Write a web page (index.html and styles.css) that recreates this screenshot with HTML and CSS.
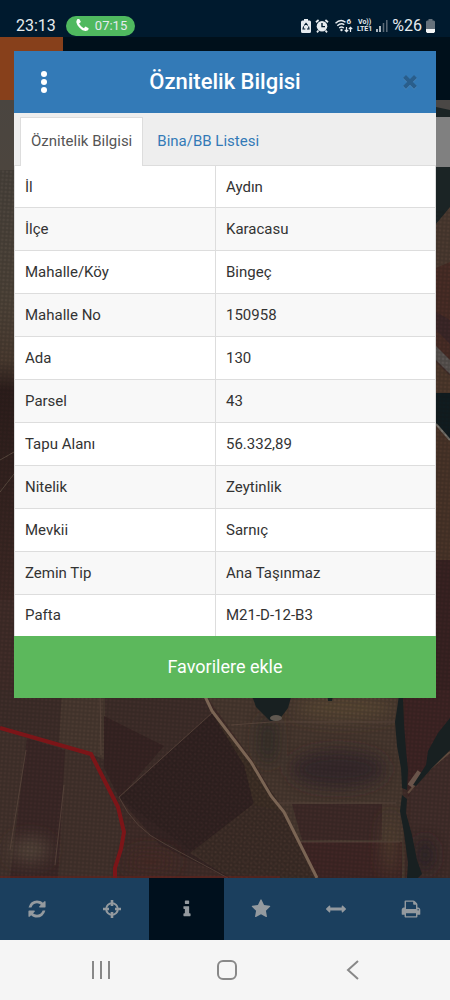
FILE: index.html
```html
<!DOCTYPE html>
<html lang="tr">
<head>
<meta charset="utf-8">
<meta name="viewport" content="width=device-width, initial-scale=1">
<title>Öznitelik Bilgisi</title>
<link rel="stylesheet" href="styles.css">
</head>
<body>
<div class="screen">
  <header class="status">
    <span class="clock">23:13</span>
    <span class="call"><svg class="call-icon" viewBox="150 150 1500 1500" aria-hidden="true"><path d="M1600 1240q0 27-10 70.5t-21 68.5q-21 50-122 106-94 51-186 51-27 0-53-3.5t-57.5-12.5-47-14.5-55.5-20.5-49-18q-98-35-175-83-127-79-264-216t-216-264q-48-77-83-175-3-9-18-49t-20.5-55.5-14.5-47-12.5-57.5-3.5-53q0-92 51-186 56-101 106-122 25-11 68.5-21t70.5-10q14 0 21 3 18 6 53 76 11 19 30 54t35 63.5 31 53.5q3 4 17.5 25t21.5 35.5 7 28.5q0 20-28.5 50t-62 55-62 53-28.5 46q0 9 5 22.5t8.5 20.5 14 24 11.5 19q76 137 174 235t235 174q2 1 19 11.5t24 14 20.5 8.5 22.5 5q18 0 46-28.5t53-62 55-62 50-28.5q14 0 28.5 7t35.5 21.5 25 17.5q25 15 53.5 31t63.5 35 54 30q70 35 76 53 3 7 3 21z"/></svg>07:15</span>
    <span class="indicators">
      <svg width="10" height="14" viewBox="0 0 10 14" aria-hidden="true"><path d="M3 0h4v1.500h1.500A1.500 1.500 0 0 1 10 3v9.500A1.500 1.500 0 0 1 8.500 14h-7A1.500 1.500 0 0 1 0 12.500V3a1.500 1.500 0 0 1 1.500-1.500H3z" fill="#e6ebef"/><path d="M3.200 6.500 5 4.300l1.800 2.200M7.600 7.500l.4 2.500H6M4.300 10H2l.6-2.600" fill="none" stroke="#001a2e" stroke-width="1.100"/></svg>
      <svg width="14" height="14" viewBox="0 0 14 14" aria-hidden="true"><circle cx="7" cy="7.300" r="5.300" fill="#e6ebef"/><path d="M1 3.200 3.600 1M13 3.200 10.400 1M3.500 11.500 2 13.300M10.500 11.500l1.500 1.800" stroke="#e6ebef" stroke-width="1.800"/><path d="M7 4v3.600h3" fill="none" stroke="#001a2e" stroke-width="1.400"/></svg>
      <span class="wifi"><svg width="18" height="14" viewBox="0 0 18 14" aria-hidden="true"><g fill="none" stroke="#e6ebef" stroke-width="1.400"><path d="M.5 4.200Q5.500-.8 10.500 3.200M2.300 6.700q3.700-3.500 7-1M4.200 9q2.300-2 4.600 0"/><path d="M11.500 8v4.500M9.800 11l1.700 1.700L13.200 11M15.500 13V8.500M13.800 10l1.700-1.700L17.200 10" stroke-width="1.200"/></g><circle cx="6.500" cy="11" r="1.200" fill="#e6ebef"/></svg><span class="wifi-gen">6</span></span>
      <span class="lte"><span>Vo))</span><span>LTE1</span></span>
      <svg width="12" height="13" viewBox="0 0 12 13" aria-hidden="true"><path d="M1 10v3M4 7v6" stroke="#e6ebef" stroke-width="1.500"/><path d="M7.500 4v9M10.800 1v12" stroke="#5c6b78" stroke-width="1.500"/></svg>
      <span class="charge">%26</span>
      <svg width="9" height="14" viewBox="0 0 9 14" aria-hidden="true"><path d="M2.500 0h4v1.500H8l1 1V10H0V2.500l1-1h1.500z" fill="#65717b"/><path d="M0 10h9v2.500L8 14H1l-1-1.500z" fill="#f4f6f7"/></svg>
    </span>
  </header>

  <main class="stage">
    <svg class="map" viewBox="0 37 450 841" preserveAspectRatio="none" aria-hidden="true">
      <defs>
        <pattern id="rows" width="4" height="4" patternUnits="userSpaceOnUse" patternTransform="rotate(4)"><path d="M0 1h4M1 0v4" stroke="#11100e" stroke-width="1.400" opacity=".22"/></pattern>
        <pattern id="slant" width="4" height="4" patternUnits="userSpaceOnUse" patternTransform="rotate(50)"><path d="M0 1h4M1 0v4" stroke="#130d0b" stroke-width="1.400" opacity=".2"/></pattern>
        <linearGradient id="left" x2="0" y2="1"><stop offset="0" stop-color="#4a4540"/><stop offset=".4" stop-color="#50453a"/><stop offset=".52" stop-color="#4c3c31"/><stop offset=".58" stop-color="#2d1d1b"/><stop offset="1" stop-color="#3f2925"/></linearGradient>
        <filter id="soft" x="-50%" y="-50%" width="200%" height="200%"><feGaussianBlur stdDeviation="8"/></filter>
      </defs>
      <path d="M0 37h450v841H0z" fill="#422d29"/>
      <path d="M0 100h30v500H0z" fill="url(#left)"/>
      <path d="m0 492 14-18M0 460l14-8" stroke="#5c4b40"/>
      <path d="M420 100h30v110l-14 14h-16z" fill="#1b2425"/>
      <path d="M420 100h30v10l-14-3h-16z" fill="#4a4745"/>
      <path d="m436 224 14-17v60l-14 20z" fill="#4d3b31"/>
      <path d="m436 268 14-6v100l-14-12z" fill="#4a2d26"/>
      <path d="m436 312 14 8v24l-14-14z" fill="#3d2728"/>
      <path d="m436 346 14 14v14l-14-14z" fill="#5b5552"/>
      <path d="m436 362 14 14v20h-14z" fill="#4f392c"/>
      <path d="M436 393h14v48l-14-15z" fill="#101c20"/>
      <path d="m436 424 14 16v120h-14z" fill="#4b3529"/>
      <path d="m436 424 14 16" stroke="#77736c" stroke-width="2"/>
      <path d="M436 560h14v140h-14z" fill="#3a2222"/>

      <path d="M0 690h202l10 24-93 84-28-44L0 727z" fill="#402e2a"/>
      <path d="M62 690h43v70l-14-6-32-9z" fill="#4b3a31"/>
      <path d="M0 729l91 26 27 50 6 35-8 38H0z" fill="#45332d"/>
      <path d="m27 738 38 12-7 128H10z" fill="#3d2827"/>
      <path d="m104 716 60 30-45 52-15-30z" fill="#382423"/>
      <path d="M212 713 285 810 314 878H228L160 845 119 798z" fill="#372524"/>
      <path d="m190 853 62-48 20-20 13 25 30 68h-85z" fill="#44322b"/>
      <path d="m212 713 38 50 34 48-30-6-10-40z" fill="#453429"/>
      <path d="M202 690h198l5 188h-88l-34-68-31-50z" fill="#4a3930"/>
      <path d="M300 842h102v36h-86z" fill="#412625"/>
      <path d="M292 804h90v36h-80z" fill="#402a28"/>
      <path d="M401 690h49v30l-24 53-18 24z" fill="#3f2424"/>
      <path d="m410 792 40-40v126h-37z" fill="#432e2b"/>
      <g filter="url(#soft)">
        <ellipse cx="338" cy="769" rx="48" ry="19" fill="#33252a" opacity=".85"/>
        <ellipse cx="268" cy="740" rx="10" ry="25" fill="#302a28" opacity=".8"/>
        <ellipse cx="345" cy="708" rx="50" ry="11" fill="#5b4936"/>
        <ellipse cx="30" cy="850" rx="20" ry="13" fill="#54443a"/>
        <ellipse cx="390" cy="845" rx="6" ry="30" fill="#564331"/>
        <ellipse cx="425" cy="855" rx="9" ry="17" fill="#2b2425"/>
        <ellipse cx="150" cy="862" rx="26" ry="12" fill="#472b27"/>
      </g>
      <path d="M0 690h450v188H0zM0 170h14v520H0zM436 210h14v480h-14z" fill="url(#rows)"/>
      <path d="M119 798 212 713 285 810 314 878H228z" fill="url(#slant)"/>
      <g fill="none">
        <path d="M119 797 212 713M119 797q15 32 46 47l63 34M231 725l40-3h127M100 690l1 65M277 803h119M300 842h100M26 750 10 850M64 785l-9 80" stroke="#5c483e" opacity=".7"/>
        <path d="M202 690 212 711 251 762 271 796 284 812 317 878" stroke="#7b6554" stroke-width="3"/>
        <path d="M408 793 426 772 450 752" stroke="#5d493c" stroke-width="2"/>
        <path d="m410 786 10-14" stroke="#69544a" stroke-width="6"/>
      </g>
      <g fill="#182021">
        <path d="m399 695 4 2 1 27 2 26 2 20-1 20-5-2-1-20-4-22-2-24 2-13z"/>
        <path d="m402 795 5 4-1 14 6 22 5 25 5 14-4 4h-11l1-15-4-30-4-22z"/>
        <path d="m450 718-12 15-10 18-2 14-13 20 3 1 16-18 18-18z"/>
        <path d="M250 690h43l-5 18-9 12-9 1-14-14z"/>
        <path d="M327 690h7l-2 11h-4z"/>
      </g>
      <ellipse cx="276" cy="718" rx="6" ry="3" fill="#5f5850"/>
      <path d="M0 728 91 754 118 807 124 832 121 849 115 868V878" fill="none" stroke="#7c1518" stroke-width="4"/>
      <path d="M0 877h280" stroke="#6a211a"/>
      <path d="M0 37h450v63H0z" fill="#00101b"/>
      <path d="M0 37h63v63H0z" fill="#87401b"/>
      <path d="M420 117h30v50h-30z" fill="#808080"/>
    </svg>

    <section class="dialog" role="dialog" aria-labelledby="dialog-title">
      <div class="dialog-head">
        <button class="head-button" type="button" aria-label="Menü"><svg width="8" height="24" viewBox="0 0 8 24" aria-hidden="true"><g fill="#fff"><circle cx="4" cy="4" r="3"/><circle cx="4" cy="12" r="3"/><circle cx="4" cy="20" r="3"/></g></svg></button>
        <h1 class="dialog-title" id="dialog-title">Öznitelik Bilgisi</h1>
        <button class="head-button" type="button" aria-label="Kapat"><svg width="16" height="16" viewBox="0 0 16 16" aria-hidden="true"><path d="m2.500 3 11 11m0-11-11 11" stroke="#5b96c9" stroke-width="4.200"/><path d="m2.500 2.500 11 11m0-11-11 11" stroke="#295e8c" stroke-width="4.200"/></svg></button>
      </div>
      <nav class="tabs">
        <a class="tab tab-active" href="#oznitelik" aria-current="page">Öznitelik Bilgisi</a>
        <a class="tab" href="#bina">Bina/BB Listesi</a>
      </nav>
      <table class="facts" id="oznitelik">
        <tbody>
          <tr><th scope="row">İl</th><td>Aydın</td></tr>
          <tr><th scope="row">İlçe</th><td>Karacasu</td></tr>
          <tr><th scope="row">Mahalle/Köy</th><td>Bingeç</td></tr>
          <tr><th scope="row">Mahalle No</th><td>150958</td></tr>
          <tr><th scope="row">Ada</th><td>130</td></tr>
          <tr><th scope="row">Parsel</th><td>43</td></tr>
          <tr><th scope="row">Tapu Alanı</th><td>56.332,89</td></tr>
          <tr><th scope="row">Nitelik</th><td>Zeytinlik</td></tr>
          <tr><th scope="row">Mevkii</th><td>Sarnıç</td></tr>
          <tr><th scope="row">Zemin Tip</th><td>Ana Taşınmaz</td></tr>
          <tr><th scope="row">Pafta</th><td>M21-D-12-B3</td></tr>
        </tbody>
      </table>
      <button class="favorite" type="button">Favorilere ekle</button>
    </section>
  </main>

  <nav class="toolbar" aria-label="Harita araçları">
    <button class="tool" type="button" aria-label="Yenile"><svg class="tool-icon" viewBox="0 0 1792 1792"><path d="M1639 1056q0 5-1 7-64 268-268 434.500t-478 166.500q-146 0-282.500-55t-243.500-157l-129 129q-19 19-45 19t-45-19-19-45v-448q0-26 19-45t45-19h448q26 0 45 19t19 45-19 45l-137 137q71 66 161 102t187 36q134 0 250-65t186-179q11-17 53-117 8-23 30-23h192q13 0 22.500 9.500t9.500 22.500zm25-800v448q0 26-19 45t-45 19h-448q-26 0-45-19t-19-45 19-45l138-138q-148-137-349-137-134 0-250 65t-186 179q-11 17-53 117-8 23-30 23h-199q-13 0-22.500-9.500t-9.500-22.500v-7q65-268 270-434.500t480-166.500q146 0 284 55.500t245 156.500l130-129q19-19 45-19t45 19 19 45z"/></svg></button>
    <button class="tool" type="button" aria-label="Konum"><svg class="tool-icon" viewBox="0 0 20 20"><circle cx="10" cy="10" r="5.800" fill="none" stroke="currentColor" stroke-width="2"/><path d="M10 1v6M10 13v6M1 10h6M13 10h6" stroke="currentColor" stroke-width="2.600"/></svg></button>
    <button class="tool tool-active" type="button" aria-label="Bilgi" aria-pressed="true"><svg class="tool-icon" viewBox="0 0 1792 1792"><path d="M1216 1344v128q0 26-19 45t-45 19h-512q-26 0-45-19t-19-45v-128q0-26 19-45t45-19h64v-384h-64q-26 0-45-19t-19-45v-128q0-26 19-45t45-19h384q26 0 45 19t19 45v576h64q26 0 45 19t19 45zm-128-1152v192q0 26-19 45t-45 19h-256q-26 0-45-19t-19-45v-192q0-26 19-45t45-19h256q26 0 45 19t19 45z"/></svg></button>
    <button class="tool" type="button" aria-label="Favoriler"><svg class="tool-icon" viewBox="0 0 1792 1792"><path d="M1728 647q0 22-26 48l-363 354 86 500q1 7 1 20 0 21-10.500 35.500t-30.500 14.500q-19 0-40-12l-449-236-449 236q-22 12-40 12-21 0-31.500-14.500t-10.500-35.500q0-6 2-20l86-500-364-354q-25-27-25-48 0-37 56-46l502-73 225-455q19-41 49-41t49 41l225 455 502 73q56 9 56 46z"/></svg></button>
    <button class="tool" type="button" aria-label="Ölçüm"><svg class="tool-icon" viewBox="0 0 1792 1792"><path d="M1792 896q0 26-19 45l-256 256q-19 19-45 19t-45-19-19-45v-128h-1024v128q0 26-19 45t-45 19-45-19l-256-256q-19-19-19-45t19-45l256-256q19-19 45-19t45 19 19 45v128h1024v-128q0-26 19-45t45-19 45 19l256 256q19 19 19 45z"/></svg></button>
    <button class="tool" type="button" aria-label="Yazdır"><svg class="tool-icon" viewBox="0 0 1792 1792"><path d="M448 1536h896v-256h-896v256zm0-640h896v-384h-160q-40 0-68-28t-28-68v-160h-640v640zm1152 64q0-26-19-45t-45-19-45 19-19 45 19 45 45 19 45-19 19-45zm128 0v416q0 13-9.500 22.500t-22.500 9.500h-224v160q0 40-28 68t-68 28h-960q-40 0-68-28t-28-68v-160h-224q-13 0-22.500-9.500t-9.500-22.500v-416q0-79 56.500-135.500t135.500-56.500h64v-544q0-40 28-68t68-28h672q40 0 88 20t76 48l152 152q28 28 48 76t20 88v256h64q79 0 135.500 56.500t56.500 135.500z"/></svg></button>
  </nav>

  <nav class="system" aria-label="Sistem">
    <button class="key" type="button" aria-label="Son uygulamalar"><svg width="20" height="20" viewBox="0 0 20 20"><path d="M2 1v18M10 1v18M18 1v18"/></svg></button>
    <button class="key" type="button" aria-label="Ana ekran"><svg width="20" height="20" viewBox="0 0 20 20"><rect x="1" y="1" width="18" height="18" rx="5"/></svg></button>
    <button class="key" type="button" aria-label="Geri"><svg width="20" height="20" viewBox="0 0 20 20"><path d="M15 1 5 10l10 9"/></svg></button>
  </nav>
</div>
</body>
</html>
```
FILE: styles.css
```css
* {
  box-sizing: border-box;
}

body {
  margin: 0;
  font-family: Roboto, "Noto Sans", sans-serif;
  font-size: 15px;
  line-height: 20px;
  color: #333;
}

button {
  border: 0;
  padding: 0;
  background: none;
  font: inherit;
  color: inherit;
}

.screen {
  display: flex;
  flex-direction: column;
  min-height: 100vh;
}

.status {
  display: flex;
  align-items: center;
  gap: 10px;
  height: 37px;
  padding: 14px 15px 0 16px;
  background: #001a2e;
  color: #e6ebef;
  font-size: 16px;
}

.call {
  display: flex;
  align-items: center;
  gap: 6px;
  padding: 0 8px 0 10px;
  border-radius: 10px;
  background: #4fb95f;
  font-size: 13px;
}

.call-icon {
  width: 13px;
  height: 13px;
  fill: #fff;
}

.indicators {
  display: flex;
  align-items: center;
  gap: 4px;
  margin-left: auto;
}

.indicators svg {
  display: block;
}

.wifi {
  position: relative;
  margin-left: 2px;
}

.wifi-gen {
  position: absolute;
  top: -1px;
  right: 2px;
  font-size: 8px;
  font-weight: 700;
  line-height: 8px;
}

.lte {
  display: flex;
  flex-direction: column;
  align-items: center;
  font-size: 7px;
  font-weight: 700;
  line-height: 7px;
}

.stage {
  position: relative;
  flex: 1;
  padding: 14px;
}

.map {
  position: absolute;
  inset: 0;
  width: 100%;
  height: 100%;
}

.dialog {
  position: relative;
  background: #fff;
}

.dialog-head {
  display: flex;
  align-items: center;
  justify-content: space-between;
  height: 62px;
  padding: 0 10px 0 14px;
  background: #337ab7;
}

.head-button {
  display: flex;
  align-items: center;
  justify-content: center;
  width: 32px;
  height: 32px;
}

.dialog-title {
  flex: 1;
  margin: 0;
  padding-right: 4px;
  color: #fff;
  font-size: 22px;
  font-weight: 500;
  line-height: 28px;
  text-align: center;
}

.tabs {
  display: flex;
  padding: 4px 6px 0;
  background: #eee;
  border-bottom: 1px solid #ddd;
}

.tab {
  padding: 13px 10px 14px;
  border: 1px solid transparent;
  border-bottom: 0;
  color: #337ab7;
  text-decoration: none;
  margin-right: 3px;
}

.tab-active {
  margin-bottom: -1px;
  border-color: #ddd;
  background: #fff;
  color: #555;
}

.facts {
  width: 100%;
  height: 470px;
  border-collapse: collapse;
  table-layout: fixed;
}

.facts tr:nth-child(even) {
  background: #f8f8f8;
}

.facts th,
.facts td {
  padding: 0 10px;
  border: 1px solid #ddd;
  font-weight: 400;
  text-align: left;
}

.facts tr:first-child > * {
  border-top: 0;
}

.facts tr:last-child > * {
  border-bottom: 0;
}

.facts th {
  width: 201px;
}

.favorite {
  display: block;
  width: 100%;
  height: 62px;
  background: #5cb85c;
  color: #fff;
  font-size: 18px;
}

.toolbar {
  display: grid;
  grid-template-columns: repeat(6, 1fr);
  height: 62px;
  padding-right: 2px;
  background: #1b3f5e;
}

.tool {
  display: flex;
  align-items: center;
  justify-content: center;
  color: #949a9f;
}

.tool-active {
  background: #00101d;
}

.tool-icon {
  width: 20px;
  height: 20px;
  fill: currentColor;
}

.system {
  display: flex;
  align-items: center;
  justify-content: center;
  gap: 106px;
  height: 60px;
  padding-left: 4px;
  background: #f5f5f5;
}

.key svg {
  display: block;
  fill: none;
  stroke: #888;
  stroke-width: 2;
}
```
